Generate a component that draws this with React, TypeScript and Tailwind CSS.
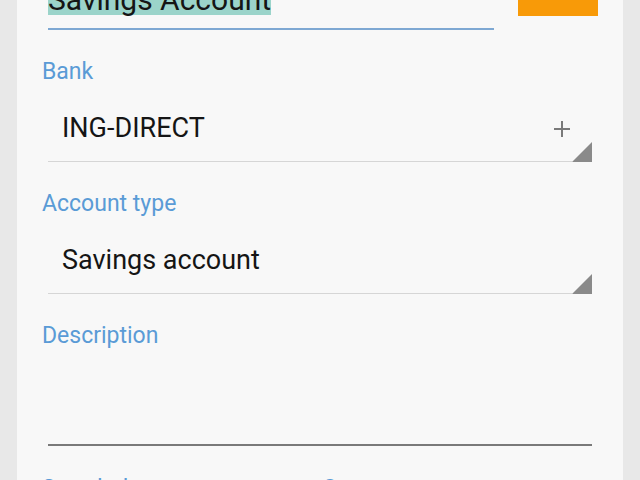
import React from "react";

const font = { fontFamily: "Roboto, 'Noto Sans', sans-serif" };

function Triangle() {
  return (
    <svg width="20" height="20" viewBox="0 0 20 20" className="block shrink-0">
      <polygon points="20,0 20,20 0,20" fill="#8a8a8a" />
    </svg>
  );
}

function Plus() {
  return (
    <svg width="18" height="18" viewBox="0 0 18 18" className="block">
      <path d="M9 1v16M1 9h16" stroke="#7a7a7a" strokeWidth="2" fill="none" />
    </svg>
  );
}

function SelectField({ label, value, plus, mt }: { label: string; value: string; plus?: boolean; mt: string }) {
  return (
    <div className={`shrink-0 flex flex-col ${mt}`}>
      <div className="text-[23px] leading-[27px] text-[#5a9bd6]">{label}</div>
      <div className="mt-[28px] mx-[6px] flex items-end">
        <div className="flex-1 flex flex-col">
          <div className="flex items-center justify-between h-[31px] pl-[14px] pr-px">
            <span className="text-[27px] leading-[31px] text-[#151515]">{value}</span>
            {plus ? <Plus /> : null}
          </div>
          <div className="mt-[17px] h-px bg-[#d6d6d6]" />
        </div>
        <Triangle />
      </div>
    </div>
  );
}

export default function App() {
  return (
    <div className="h-[480px] w-[640px] overflow-hidden bg-[#e8e8e8] px-[17px]" style={font}>
      <div className="h-full bg-[#f8f8f8] px-[25px] flex flex-col">
        <div className="shrink-0 mt-[-21px] flex items-start">
          <div className="ml-[6px] w-[446px] flex flex-col items-start">
            <span className="inline-block bg-[#9bd4ca] text-[30px] leading-[31px] pt-[5px] text-[#151515]">
              Savings Account
            </span>
            <div className="mt-[13px] h-[2px] w-full bg-[#7ea8d3]" />
          </div>
          <div className="ml-[24px] w-[80px] h-[37px] bg-[#f89a08]" />
        </div>
        <SelectField label="Bank" value="ING-DIRECT" plus mt="mt-[28px]" />
        <SelectField label="Account type" value="Savings account" mt="mt-[28px]" />
        <div className="shrink-0 mt-[28px] text-[23px] leading-[27px] text-[#5a9bd6]">Description</div>
        <div className="shrink-0 mt-[95px] mx-[6px] h-[2px] bg-[#7a7a7a]" />
        <div className="shrink-0 mt-[29px] flex text-[23px] leading-[27px] text-[#5a9bd6]">
          <div className="w-[280px]">Start balance</div>
          <div>Currency</div>
        </div>
      </div>
    </div>
  );
}
